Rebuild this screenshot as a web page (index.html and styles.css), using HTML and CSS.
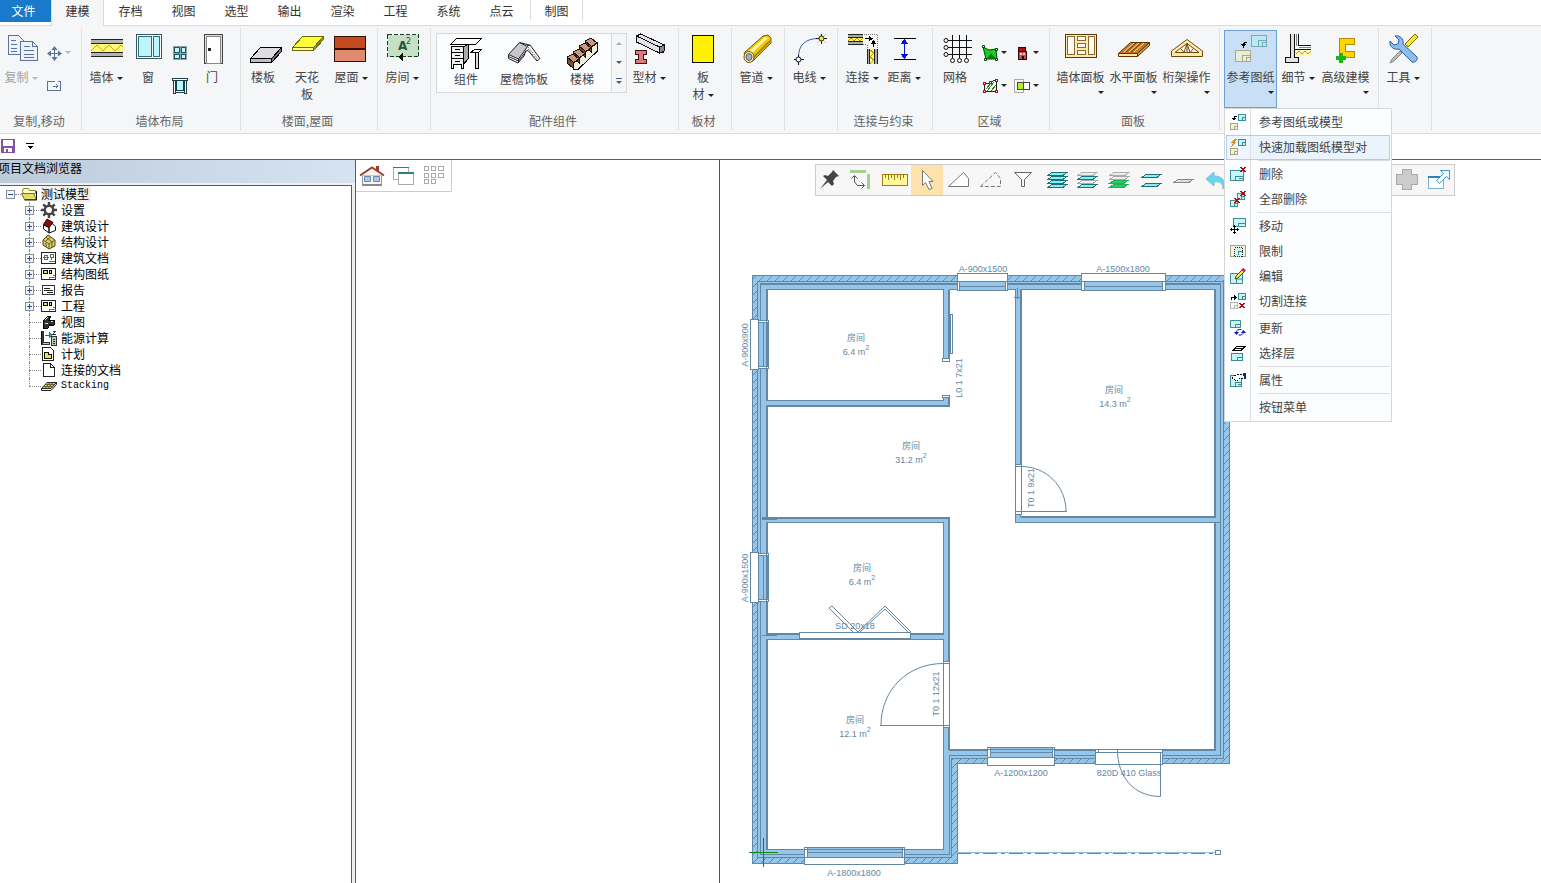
FILE: index.html
```html
<!DOCTYPE html>
<html lang="zh-CN">
<head>
<meta charset="utf-8">
<title>测试模型</title>
<link rel="stylesheet" href="styles.css">
</head>
<body>
<svg class="defs" aria-hidden="true">
  <defs>
    <symbol id="sheet" viewBox="0 0 8 7"><path d="M.5.5h7v6h-7z" fill="#c9f4f6" stroke="#3c8c94"/><path d="M4.500 6.500v-3h3" fill="none" stroke="#3c8c94"/></symbol>
    <symbol id="sheet-tan" viewBox="0 0 8 7"><path d="M.5.5h7v6h-7z" fill="#f4f2dc" stroke="#aaa37c"/><path d="M4.500 6.500v-3h3" fill="none" stroke="#aaa37c"/></symbol>
    <symbol id="sheet-gray" viewBox="0 0 8 7"><path d="M.5.5h7v6h-7z" fill="#f6f6f6" stroke="#bbb"/><path d="M4.500 6.500v-3h3" fill="none" stroke="#bbb"/></symbol>
    <symbol id="cross" viewBox="0 0 6 5"><path d="M.5 0l5 5M5.500 0l-5 5" stroke="#a80d0d" stroke-width="1.500"/></symbol>
    <g id="step"><path d="M0 0l6-3 6 5-6 4z" fill="#c79a7c" stroke="#21130c"/><path d="M0 0l6 5v6l-6-5z" fill="#795033" stroke="#21130c"/></g>
    <pattern id="hatch" width="8" height="8" patternUnits="userSpaceOnUse"><path d="M-1 9l10-10" stroke="#6488a3" stroke-width="1"/></pattern>
  </defs>
</svg>

<nav class="tabs">
  <button class="tab tab-file">文件</button>
  <button class="tab tab-active">建模</button>
  <button class="tab">存档</button>
  <button class="tab">视图</button>
  <button class="tab">选型</button>
  <button class="tab">输出</button>
  <button class="tab">渲染</button>
  <button class="tab">工程</button>
  <button class="tab">系统</button>
  <button class="tab">点云</button>
  <button class="tab tab-context">制图</button>
</nav>

<header class="ribbon">
  <section class="group g-82">
    <div class="tools">
      <button class="tool w42 disabled">
        <svg class="icon" viewBox="2 31 38 38"><g fill="#edf3fa" stroke="#5c7499"><path d="M8.500 35.500h10l5 5v14h-15z"/><path d="M11 40.500h5M11 44.500h6M11 48.500h6M11 51.500h6"/><path d="M20.500 41.500h12l5 5v14h-17z"/><path d="M32.500 41.500v5h5M24 46.500h6M24 50.500h10M24 54.500h10M24 57.500h10" fill="none"/></g></svg>
        <span class="label">复制<i class="caret"></i></span>
      </button>
      <div class="smalls start">
        <button class="small disabled" aria-label="移动"><svg class="s16 soft" viewBox="0 0 16 16"><path d="M8.500 2v12M2 8.500h12" stroke="#5c7499"/><path d="M8.500 1l3 4h-6zM8.500 16l3-4h-6zM1 8.500l4-3v6zM16 8.500l-4-3v6z" fill="#5c7499"/></svg><i class="caret"></i></button>
        <button class="small disabled" aria-label="拉伸"><svg class="s16" viewBox="0 0 16 16"><path d="M9 3.500H1.500v9H14.500V3.500H12M7 8h5M10 6l2 2-2 2" fill="none" stroke="#5c7499"/></svg></button>
      </div>
    </div>
    <h2>复制,移动</h2>
  </section>

  <section class="group g-159 pad3">
    <div class="tools">
      <button class="tool w42">
        <svg class="icon" viewBox="87 31 38 38"><path d="M91 40h32v3H91zM91 53h32v3H91z" fill="#b3b3b3"/><path d="M91 44h32v8H91z" fill="#fff77a"/><path d="M91 39.500h32M91 43.500h32M91 52.500h32M91 56.500h32" stroke="#222"/><path d="M91 51l6-6 6 6 6-6 6 6 6-6 2 2" fill="none" stroke="#c9a400"/></svg>
        <span class="label">墙体<i class="caret"></i></span>
      </button>
      <button class="tool w42">
        <svg class="icon" viewBox="129 31 38 38"><path d="M136.500 34.500h25v24h-25z" fill="#fff" stroke="#355560"/><path d="M138.500 36.500h13v20h-13zM153.500 36.500h6v20h-6z" fill="#bdf6fb" stroke="#356a78"/></svg>
        <span class="label">窗</span>
      </button>
      <div class="smalls w22">
        <button class="small" aria-label="窗型"><svg class="s16" viewBox="0 0 16 16"><path d="M1 1h14v14H1z" fill="#8aa6ac"/><path d="M2.500 2.500h5v5h-5zM9.500 2.500h4v5h-4zM2.500 9.500h5v4h-5zM9.500 9.500h4v4h-4z" fill="#bdf6fb" stroke="#245560"/></svg></button>
        <button class="small" aria-label="洞口"><svg class="s16" viewBox="0 0 16 16"><path d="M1.500 2.500h2v13h-2zM12.500 2.500h2v13h-2z" fill="#fff" stroke="#173f48"/><path d="M.5.500h15v2H.5z" fill="#fff" stroke="#173f48"/><path d="M4.500 2.500h7v10h-7z" fill="#bdf6fb" stroke="#173f48"/><path d="M4 14.500h8" stroke="#173f48"/></svg></button>
      </div>
      <button class="tool w42">
        <svg class="icon" viewBox="193 31 38 38"><path d="M204.500 34.500h18v29h-18z" fill="#ddd" stroke="#444"/><path d="M206.500 36.500h14v27h-14z" fill="#fff" stroke="#888"/><path d="M208 48h3v3h-3z" fill="#222"/></svg>
        <span class="label">门</span>
      </button>
    </div>
    <h2>墙体布局</h2>
  </section>

  <section class="group g-137">
    <div class="tools">
      <button class="tool w44">
        <svg class="icon" viewBox="244 31 38 38"><path d="M260.500 47.500h21L271.500 58.500h-21z" fill="#dcdde0" stroke="#000"/><path d="M250.500 58.500h21v4h-21z" fill="#bfbfbf" stroke="#000"/><path d="M271.500 58.500l10-11v4l-10 11z" fill="#777" stroke="#000"/></svg>
        <span class="label">楼板</span>
      </button>
      <button class="tool w44">
        <svg class="icon" viewBox="288 31 38 38"><path d="M302.500 36.500h21l-10 11h-21z" fill="#fdfd3c" stroke="#6b6a00"/><path d="M292.500 47.500h21v3h-21z" fill="#fffb9a" stroke="#6b6a00"/><path d="M313.500 47.500l10-11v3l-10 11z" fill="#a8a400" stroke="#6b6a00"/></svg>
        <span class="label">天花<br>板</span>
      </button>
      <button class="tool w44">
        <svg class="icon" viewBox="332 31 38 38"><path d="M334.500 36.500h31v12h-31z" fill="#c54a20" stroke="#330f05"/><path d="M334.500 49.500h31v12h-31z" fill="#de8c6d" stroke="#330f05"/></svg>
        <span class="label">屋面<i class="caret"></i></span>
      </button>
    </div>
    <h2>楼面,屋面</h2>
  </section>

  <section class="group g-53">
    <div class="tools">
      <button class="tool w48">
        <svg class="icon" viewBox="383 31 38 38"><path d="M387.500 34.500h31v22h-31z" fill="#c6e0c6" stroke="#123f20" stroke-dasharray="4 2"/><text x="398" y="50" class="room-a">A</text><text x="406" y="44" class="room-2">2</text><path d="M398 57l5-4v8z" fill="#111"/></svg>
        <span class="label">房间<i class="caret"></i></span>
      </button>
    </div>
  </section>

  <section class="group g-248">
    <div class="tools pad5">
      <div class="gallery">
        <button class="tool item">
          <svg class="icon" viewBox="447 34 38 36"><g stroke="#000" fill="#fff"><path d="M456.500 38.500h25l-6 6h-25z"/><path d="M451.500 46.500h12v18h-12z" fill="#eee"/><path d="M451.500 52.500h12M451.500 58.500h12M455 49.500h5M455 55.500h5M455 61.500h5" fill="none"/><path d="M463.500 46.500l5-2v14l-5 6z" fill="#aaa"/><path d="M451.500 64v4h2v-4M461.500 64v4h2v-4"/><path d="M474.500 49.500h7l-3 3h-8z"/><path d="M475.500 52.500h3v16h-3z" fill="#ddd"/></g></svg>
          <span class="label">组件</span>
        </button>
        <button class="tool item">
          <svg class="icon soft" viewBox="505 34 38 36"><path d="M508.500 54.500v4l9.500 4.500 6-7 3-9" fill="#fff" stroke="#222"/><path d="M527 46l3-1 10 13.500-3 2.500-9-10.500-3 1" fill="#fff" stroke="#222"/><path d="M519.500 42.500l8 4-9 12.500-10-4.500z" fill="#c6c8cb" stroke="#222"/><path d="M508.500 56.500l10 4.500 7-9M518.500 59v4M519.500 42.500l10 2.500" fill="none" stroke="#222"/><path d="M528 47l11 13M528 49l9 11" fill="none" stroke="#777" stroke-dasharray="2 1"/></svg>
          <span class="label">屋檐饰板</span>
        </button>
        <button class="tool item">
          <svg class="icon" viewBox="563 34 38 36"><path d="M597.500 43v8l-19 18h-5l-1-8z" fill="#efefdf" stroke="#111"/><use href="#step" x="585" y="41"/><use href="#step" x="579" y="46"/><use href="#step" x="573" y="52"/><use href="#step" x="567" y="57"/></svg>
          <span class="label">楼梯</span>
        </button>
        <div class="scroller"><button aria-label="上"><i class="caret up"></i></button><button aria-label="下"><i class="caret blue"></i></button><button aria-label="更多"><i class="caret blue more"></i></button></div>
      </div>
      <button class="tool w44">
        <svg class="icon" viewBox="631 31 38 38"><path d="M637.500 36l4-2 24 11-1 7-4 1-23-11z" fill="#e4e4e6" stroke="#111"/><path d="M637.500 36l23 11v6" fill="none" stroke="#111"/><path d="M660.500 47l4.500-2v6l-4.500 2z" fill="#888" stroke="#111"/><path d="M636.500 50.500h11v4h-3v5h3v4h-11v-4h3v-5h-3z" fill="#df7a7a" stroke="#451212"/></svg>
        <span class="label">型材<i class="caret"></i></span>
      </button>
    </div>
    <h2>配件组件</h2>
  </section>

  <section class="group g-53">
    <div class="tools">
      <button class="tool w48">
        <svg class="icon" viewBox="684 31 38 38"><path d="M692.500 35.500h21v27h-21z" fill="#fff200" stroke="#111"/></svg>
        <span class="label">板<br>材<i class="caret"></i></span>
      </button>
    </div>
    <h2>板材</h2>
  </section>

  <section class="group g-53">
    <div class="tools">
      <button class="tool w48">
        <svg class="icon soft" viewBox="737 31 38 38"><path d="M744 53l19-17 5-1 3 3v5l-18 18-6 1z" fill="#f0c808" stroke="#6e5a00"/><path d="M747 53l18-16 3 1-18 17z" fill="#fff6a0"/><path d="M753 58l17-17" stroke="#a88a00" stroke-width="2"/><ellipse cx="749" cy="57" rx="5" ry="5.500" fill="#f7f3d0" stroke="#6e5a00"/><ellipse cx="749" cy="57" rx="3" ry="3.500" fill="#a9adb8" stroke="#5b5e70"/></svg>
        <span class="label">管道<i class="caret"></i></span>
      </button>
    </div>
  </section>

  <section class="group g-53">
    <div class="tools">
      <button class="tool w48">
        <svg class="icon soft" viewBox="790 31 38 38"><path d="M798.500 57c0-12 7-18.500 20-18.500" fill="none" stroke="#3c62b5"/><path d="M817 34l9 9M826 34l-9 9" stroke="#e6d800"/><path d="M821.500 34v10M816 38.500h11M798.500 55v10M794 59.500h10" stroke="#111"/><circle cx="821.500" cy="38.500" r="2.500" fill="#ffef00" stroke="#222"/><circle cx="798.500" cy="59.500" r="2.500" fill="#fff" stroke="#111"/></svg>
        <span class="label">电线<i class="caret"></i></span>
      </button>
    </div>
  </section>

  <section class="group g-95 pad3">
    <div class="tools">
      <button class="tool w42">
        <svg class="icon" viewBox="843 31 38 38"><path d="M848 34h15v3h-15zM848 42h15v3h-15zM867 49h3v15h-3zM875 49h3v15h-3z" fill="#aaa"/><path d="M848 37h15v5h-15zM870 49h5v15h-5z" fill="#fff77a"/><path d="M848 34.500h15M848 37.500h15M848 41.500h15M848 44.500h15M867.500 49v15M869.500 49v15M874.500 49v15M877.500 49v15" stroke="#222"/><path d="M848 41l3-3 3 3 3-3 3 3 3-3M870 50l4 3-4 4 4 3-4 4" stroke="#bb9b00" fill="none"/><path d="M864 34.500h13.500v14M863 44.500h4v4" fill="none" stroke="#777" stroke-dasharray="1 1"/><path d="M865 38.500h5M873.500 47v-5" stroke="#000"/><path d="M869 36l4 2.500-4 3zM870.500 44l3-4 3 4z"/></svg>
        <span class="label">连接<i class="caret"></i></span>
      </button>
      <button class="tool w42">
        <svg class="icon" viewBox="885 31 38 38"><path d="M894 38.500h22M894 59.500h22" stroke="#000"/><path d="M904.500 41v16" stroke="#0712d8"/><path d="M904.500 39l4 5h-8zM904.500 59l4-5h-8z" fill="#0712d8"/></svg>
        <span class="label">距离<i class="caret"></i></span>
      </button>
    </div>
    <h2>连接与约束</h2>
  </section>

  <section class="group g-117 pad1">
    <div class="tools">
      <button class="tool w42">
        <svg class="icon" viewBox="936 31 38 38"><g fill="none" stroke="#111"><path d="M948 40.500h24M948 47.500h24M948 54.500h24M952.500 35v23M959.500 35v23M966.500 35v23"/><g class="soft"><circle cx="946" cy="40.500" r="2"/><circle cx="946" cy="47.500" r="2"/><circle cx="946" cy="54.500" r="2"/><circle cx="952.500" cy="60.500" r="2"/><circle cx="959.500" cy="60.500" r="2"/><circle cx="966.500" cy="60.500" r="2"/></g></g></svg>
        <span class="label">网格</span>
      </button>
      <div class="smalls pairs">
        <button class="small" aria-label="区域"><svg class="s16 soft" viewBox="0 0 16 16"><path d="M1 2l6 3 7-1 1 10H4z" fill="#18d018" stroke="#064306"/><path d="M5 14l4-6 5 6z" fill="#0a6e12"/><path d="M.5.500h2v2h-2zM13.500 3.500h2v2h-2zM2.500 13.500h2v2h-2zM13.500 13.500h2v2h-2z" fill="#fff" stroke="#064306"/></svg><i class="caret"></i></button>
        <button class="small" aria-label="建筑"><svg class="s16" viewBox="0 0 16 16"><path d="M4.500 2.500h7v4h-7z" fill="#a90f14" stroke="#350406"/><path d="M4.500 6.500h8v8h-8z" fill="#bb5148" stroke="#350406"/><path d="M6 8h2v2H6zM9 8h2v2H9z" fill="#ffd3c8"/><path d="M8 11h2v3H8z" fill="#350406"/></svg><i class="caret"></i></button>
        <button class="small" aria-label="填充"><svg class="s16" viewBox="0 0 16 16"><path d="M2.500 5.500h5l4-3h3v11h-12z" fill="#eefae8" stroke="#222"/><path d="M4 11l5-6M5 13l7-9M9 13l5-6" stroke="#2f7d2f"/><path d="M1.500 4.500h2v2h-2zM1.500 12.500h2v2h-2zM13.500 1.500h2v2h-2zM13.500 12.500h2v2h-2zM7.500 3.500h2v2h-2z" fill="#fff" stroke="#b01010"/></svg><i class="caret"></i></button>
        <button class="small" aria-label="重叠"><svg class="s16" viewBox="0 0 16 16"><path d="M.5 1.500h9v13h-9z" fill="#f8f8f8" stroke="#aaa"/><path d="M3.500 4.500h12v7h-12z" fill="#fff" stroke="#444"/><path d="M4 5h5v6H4z" fill="#b8f01c"/><path d="M9.500 4v8" stroke="#444"/></svg><i class="caret"></i></button>
      </div>
    </div>
    <h2>区域</h2>
  </section>

  <section class="group g-170 pad4">
    <div class="tools">
      <button class="tool w53">
        <svg class="icon" viewBox="1061 31 38 38"><path d="M1064.500 34.500h31v23h-31z" fill="#ffe9ae" stroke="#5b3c06"/><path d="M1066.500 36.500h7v18h-7zM1076.500 36.500h8v4h-8zM1076.500 43.500h8v4h-8zM1076.500 50.500h8v4h-8zM1087.500 36.500h6v18h-6z" fill="#fffdf6" stroke="#8a672a"/></svg>
        <span class="label">墙体面板<i class="caret below"></i></span>
      </button>
      <button class="tool w53">
        <svg class="icon soft" viewBox="1114 31 38 38"><path d="M1129.500 42.500h19l-12 11h-19z" fill="#c27a28" stroke="#5b3206"/><path d="M1117.500 53.500h19v3h-19z" fill="#ffe3a0" stroke="#5b3206"/><path d="M1136.500 53.500l12-11v3l-12 11z" fill="#d79a48" stroke="#5b3206"/><path d="M1123 52l10-9M1128 52l10-9M1133 52l10-9" stroke="#ffdc98"/><path d="M1125 52l10-9M1130 52l10-9" stroke="#6b3b08"/></svg>
        <span class="label">水平面板<i class="caret below"></i></span>
      </button>
      <button class="tool w53">
        <svg class="icon soft" viewBox="1167 31 38 38"><path d="M1170.500 51l15.500-11.500 15.500 11.500v5.500h-31z" fill="#ffe9ae" stroke="#6b480a"/><path d="M1174 52.500l12-9 12 9z" fill="#fffaf0" stroke="#6b480a"/><path d="M1186 43v9M1180 49l3 3.500 3-9 3 9 3-3.500" fill="none" stroke="#6b480a"/></svg>
        <span class="label">桁架操作<i class="caret below"></i></span>
      </button>
    </div>
    <h2>面板</h2>
  </section>

  <section class="group g-159 pad4">
    <div class="tools">
      <div class="menu-anchor">
        <button class="tool w53 pressed" aria-expanded="true">
          <svg class="icon" viewBox="1231 31 38 38"><path d="M1250.500 35.500h15v11h-15z" fill="#bce9ef" stroke="#7aa9ba"/><path d="M1257.500 46v-6h8M1261 46v-4h4M1261 42.500h4" fill="none" stroke="#7aa9ba"/><path d="M1234.500 50.500h15v11h-15z" fill="#e9eedb" stroke="#aaa98c"/><path d="M1241.500 61v-6h8M1245 61v-3.500h4" fill="none" stroke="#aaa98c"/><path d="M1246 42.500h-2.500l-1 2" fill="none" stroke="#000"/><path d="M1240 44h5l-2.500 4z"/></svg>
          <span class="label">参考图纸<i class="caret below"></i></span>
        </button>
        <ul class="menu">
          <li><button><svg class="s16" viewBox="0 0 16 16"><use href="#sheet" x="8" y="0" width="8" height="7"/><use href="#sheet-tan" x="0" y="9" width="8" height="7"/><path d="M7 2.500H4.500V5" fill="none" stroke="#000"/><path d="M1.500 4h5L4 7z"/></svg>参考图纸或模型</button></li>
          <li><button class="hot"><svg class="s16" viewBox="0 0 16 16"><use href="#sheet" x="8" y="0" width="8" height="7"/><use href="#sheet-tan" x="0" y="9" width="8" height="7"/><path d="M4 0L0 4h3L1 8l6-5H4l3-3z" fill="#f08c10"/></svg>快速加载图纸模型对</button></li>
          <li class="gap"></li>
          <li><button><svg class="s16" viewBox="0 0 16 16"><path d="M.5 4.500h13v10H.5z" fill="#c9f4f6" stroke="#3c8c94"/><path d="M5.500 14v-4h8M9 12.500h4" fill="none" stroke="#3c8c94"/><use href="#cross" x="10" y="1" width="6" height="5"/></svg>删除</button></li>
          <li><button><svg class="s16" viewBox="0 0 16 16"><use href="#sheet" x="7" y="2" width="8" height="7"/><use href="#sheet" x="0" y="9" width="8" height="7"/><use href="#cross" x="10" y="0" width="6" height="5"/><use href="#cross" x="4" y="7" width="6" height="5"/></svg>全部删除</button></li>
          <li class="gap"></li>
          <li><button><svg class="s16" viewBox="0 0 16 16"><path d="M3.500.500h12v8h-12z" fill="#c9f4f6" stroke="#3c8c94"/><path d="M8.500 8V5.500h7" fill="none" stroke="#3c8c94"/><path d="M4.500 8v8M0 11.500h9" stroke="#000"/><path d="M4.500 7l2 2h-4zM4.500 16l2-2h-4zM0 11.500l2-2v4zM9 11.500l-2-2v4z"/></svg>移动</button></li>
          <li><button><svg class="s16" viewBox="0 0 16 16"><path d="M.5 2.500h15v11H.5z" fill="#f4f2dc" stroke="#aaa37c"/><path d="M4.500 4.500h8v9h-8z" fill="#c9f4f6" stroke="#222" stroke-dasharray="1 1"/><path d="M8.500 12V8.500h4" fill="none" stroke="#3c8c94"/></svg>限制</button></li>
          <li><button><svg class="s16 soft" viewBox="0 0 16 16"><path d="M.5 5.500h12v10H.5z" fill="#c9f4f6" stroke="#3c8c94"/><path d="M6.500 15v-4h6" fill="none" stroke="#3c8c94"/><path d="M5 11l1-3 7-7 2 2-7 7z" fill="#f5e04a" stroke="#574a10"/><path d="M13 0l3 2-2 2-3-2z" fill="#d02030"/></svg>编辑</button></li>
          <li><button><svg class="s16" viewBox="0 0 16 16"><use href="#sheet" x="8" y="0" width="8" height="7"/><use href="#sheet-gray" x="0" y="9" width="8" height="7"/><use href="#cross" x="9" y="10" width="6" height="5"/><path d="M1.500 7V4.500H5" fill="none" stroke="#000"/><path d="M4 2l3 2.500L4 7z"/></svg>切割连接</button></li>
          <li class="gap"></li>
          <li><button><svg class="s16 soft" viewBox="0 0 16 16"><path d="M.5.500h10v7H.5z" fill="#c9f4f6" stroke="#3c8c94"/><path d="M5.500 7V4.500h5" fill="none" stroke="#3c8c94"/><path d="M6.500 12c0-2 2-3 5-2.500M13.500 12c0 2-2 3.500-5 3" fill="none" stroke="#1014b5"/><path d="M4 12h5l-2.500 3zM11 13h5l-2.500-3z" fill="#1014b5"/></svg>更新</button></li>
          <li><button><svg class="s16" viewBox="0 0 16 16"><path d="M1.500 8.500h11v7h-11z" fill="#c9f4f6" stroke="#3c8c94"/><path d="M7.500 15v-3h5" fill="none" stroke="#3c8c94"/><path d="M6 1h10l-4 5H2z"/><path d="M6 2.500h7M5 4.500h6" stroke="#fff"/></svg>选择层</button></li>
          <li class="gap"></li>
          <li><button><svg class="s16" viewBox="0 0 16 16"><path d="M.5 3.500h11v11H.5z" fill="#c9f4f6" stroke="#3c8c94"/><path d="M5.500 14v-4h6M8 12.500h3" fill="none" stroke="#3c8c94"/><path d="M2 6l5-4h7v4h-4L7 9z" fill="#fff" stroke="#000" stroke-dasharray="2 1"/><path d="M13 1h3v6h-2z" fill="#1a1e7c"/></svg>属性</button></li>
          <li class="gap"></li>
          <li><button><span class="s16"></span>按钮菜单</button></li>
        </ul>
      </div>
      <button class="tool w42">
        <svg class="icon" viewBox="1279 31 38 38"><path d="M1290 34h4v24h5v4h-14v-4h5z" fill="#e2e2e2"/><path d="M1290.500 34v23.500h-5v5h13v-5h-4V34M1298.500 34v11.500h12M1294 49.500h17" fill="none" stroke="#111"/><path d="M1296.500 34v12M1299 47.500h12" stroke="#888"/><path d="M1295 50h16v5h-16z" fill="#fff9b4"/><path d="M1296 54l3-3 3 3 3-3 3 3 3-3" fill="none" stroke="#999a60"/></svg>
        <span class="label">细节<i class="caret"></i></span>
      </button>
      <button class="tool w53">
        <svg class="icon" viewBox="1326 31 38 38"><path d="M1338.500 38.500h15v6h-9v7h9v6h-15z" fill="#ffd400" stroke="#b58e00"/><path d="M1338 53h3v3h3v3h-3v3h-3v-3h-3v-3h3z" fill="#16b916" stroke="#16b916"/></svg>
        <span class="label">高级建模<i class="caret below"></i></span>
      </button>
    </div>
  </section>

  <section class="group g-53">
    <div class="tools">
      <button class="tool w48">
        <svg class="icon soft" viewBox="1384 31 38 38"><path d="M1415 34l3 3-10 10-3-3z" fill="#f8e524" stroke="#7c6d00"/><path d="M1400 51l-8 8-2 4 4-2 8-8z" fill="#bbb" stroke="#888"/><path d="M1390 41l4 4 4-1 1-4-4-4c5-1 9 3 8 8l14 13c1 3-2 6-5 5l-13-13c-5 1-10-2-9-8z" fill="#8fbdf0" stroke="#2c5f9e"/></svg>
        <span class="label">工具<i class="caret"></i></span>
      </button>
    </div>
  </section>
</header>

<div class="quick">
  <button aria-label="保存"><svg width="14" height="14" viewBox="0 0 14 14"><path d="M0 0h14v14H0z" fill="#8254a2"/><path d="M2 1h10v6H2zM3 9h8v4H3z" fill="#fff"/><path d="M5 10h2v3H5z" fill="#8254a2"/></svg></button>
  <button aria-label="自定义"><svg width="8" height="6" viewBox="0 0 8 6"><path d="M0 0h8v1H0zM1 3h6L4 6z"/></svg></button>
</div>

<main class="work">
  <aside class="browser">
    <h1>项目文档浏览器</h1>
    <div class="tree">
      <div class="node root"><button class="exp" aria-label="折叠"><svg width="9" height="9" viewBox="0 0 9 9"><path d="M.5.500h8v8h-8z" fill="#f2f4f8" stroke="#8a8f98"/><path d="M2 4.500h5" stroke="#2f4d96"/></svg></button><i class="dots"></i><svg class="s16 soft" viewBox="0 0 16 16"><path d="M1.500 5.500l1-3h5l1 2h6v3h-12z" fill="#fffbd0" stroke="#8a8427"/><path d="M.5 7.500h12l3 6h-12z" fill="#e8df62" stroke="#77711d"/><path d="M15.500 5v9h-12" fill="none" stroke="#111"/></svg><span class="name selected">测试模型</span></div>
      <ul>
        <li class="node"><button class="exp" aria-label="展开"><svg width="9" height="9" viewBox="0 0 9 9"><path d="M.5.500h8v8h-8z" fill="#f2f4f8" stroke="#8a8f98"/><path d="M2 4.500h5M4.500 2v5" stroke="#2f4d96"/></svg></button><i class="dots"></i><svg class="s16 soft" viewBox="0 0 16 16"><path d="M8 0v16M0 8h16M2.300 2.300l11.400 11.400M13.700 2.300L2.300 13.700" stroke="#444" stroke-width="2.500"/><circle cx="8" cy="8" r="4.200" fill="#fff" stroke="#444" stroke-width="2.500"/></svg><span class="name">设置</span></li>
        <li class="node"><button class="exp" aria-label="展开"><svg width="9" height="9" viewBox="0 0 9 9"><path d="M.5.500h8v8h-8z" fill="#f2f4f8" stroke="#8a8f98"/><path d="M2 4.500h5M4.500 2v5" stroke="#2f4d96"/></svg></button><i class="dots"></i><svg class="s16 soft" viewBox="0 0 16 16"><path d="M2.500 7l5.500 2.500v5.500l-5.500-4zM8 9.500l3-4 3.500 3v4L8 15z" fill="#fff" stroke="#111"/><path d="M6 1l6 3.500-4 5-5.500-3z" fill="#8c0b0b" stroke="#300"/></svg><span class="name">建筑设计</span></li>
        <li class="node"><button class="exp" aria-label="展开"><svg width="9" height="9" viewBox="0 0 9 9"><path d="M.5.500h8v8h-8z" fill="#f2f4f8" stroke="#8a8f98"/><path d="M2 4.500h5M4.500 2v5" stroke="#2f4d96"/></svg></button><i class="dots"></i><svg class="s16 soft" viewBox="0 0 16 16"><path d="M7 1l7 5v6l-6 3-6-4V6z" fill="#d4cb6a" stroke="#4b4510"/><path d="M2 6l6 4 6-4M8 10v5M5 3l6 5M9 3L4 8M5 9v4M11 8v5" fill="none" stroke="#6b6420"/></svg><span class="name">结构设计</span></li>
        <li class="node"><button class="exp" aria-label="展开"><svg width="9" height="9" viewBox="0 0 9 9"><path d="M.5.500h8v8h-8z" fill="#f2f4f8" stroke="#8a8f98"/><path d="M2 4.500h5M4.500 2v5" stroke="#2f4d96"/></svg></button><i class="dots"></i><svg class="s16" viewBox="0 0 16 16"><path d="M.5 2.500h14v11H.5z" fill="#fff" stroke="#222"/><path d="M2 7.500h6M3.500 5.500h3v4h-3zM9.500 4.500h3v3h-3zM10.500 8v2M8 11.500h6" fill="none" stroke="#666"/></svg><span class="name">建筑文档</span></li>
        <li class="node"><button class="exp" aria-label="展开"><svg width="9" height="9" viewBox="0 0 9 9"><path d="M.5.500h8v8h-8z" fill="#f2f4f8" stroke="#8a8f98"/><path d="M2 4.500h5M4.500 2v5" stroke="#2f4d96"/></svg></button><i class="dots"></i><svg class="s16" viewBox="0 0 16 16"><path d="M.5 2.500h14v11H.5z" fill="#fff" stroke="#222"/><path d="M2.500 4.500h4v3h-4zM8.500 4.500h2v3h-2z" fill="#e7dd65" stroke="#000"/><path d="M8.500 13v-2h6M12 9.500h2" fill="none" stroke="#777"/></svg><span class="name">结构图纸</span></li>
        <li class="node"><button class="exp" aria-label="展开"><svg width="9" height="9" viewBox="0 0 9 9"><path d="M.5.500h8v8h-8z" fill="#f2f4f8" stroke="#8a8f98"/><path d="M2 4.500h5M4.500 2v5" stroke="#2f4d96"/></svg></button><i class="dots"></i><svg class="s16" viewBox="0 0 16 16"><path d="M1.500 3.500h12v9h-12z" fill="#fff" stroke="#333"/><path d="M3 6.500h6M3 8.500h9M6 10.500h6" stroke="#222"/></svg><span class="name">报告</span></li>
        <li class="node"><button class="exp" aria-label="展开"><svg width="9" height="9" viewBox="0 0 9 9"><path d="M.5.500h8v8h-8z" fill="#f2f4f8" stroke="#8a8f98"/><path d="M2 4.500h5M4.500 2v5" stroke="#2f4d96"/></svg></button><i class="dots"></i><svg class="s16" viewBox="0 0 16 16"><path d="M.5 2.500h14v11H.5z" fill="#fff" stroke="#222"/><path d="M2.500 4.500h4v3h-4zM8.500 4.500h2v3h-2z" fill="#e7dd65" stroke="#000"/><path d="M8.500 13v-2h6M12 9.500h2" fill="none" stroke="#777"/></svg><span class="name">工程</span></li>
        <li class="node leaf"><i class="dots"></i><svg class="s16" viewBox="0 0 16 16"><path d="M2 7l5-5h3l-2 4h5v5l-3 1-1-2-2 4H2z" fill="#333" stroke="#000"/><path d="M4 6l3-3M4 9h3M10 7h2" stroke="#ddd"/></svg><span class="name">视图</span></li>
        <li class="node leaf"><i class="dots"></i><svg class="s16" viewBox="0 0 16 16"><path d="M.5 1v14M2.500 1v10" stroke="#111"/><path d="M1 1h1v11h6v2H1z" fill="#e6d900" stroke="#333"/><path d="M4 5h4M8 2l3 3-3 3z" stroke="#137a85" fill="#1fb9c4"/><path d="M10.500 6.500h5v9h-5z" fill="#b9c9b0" stroke="#333"/><path d="M12 9h2M12 11h2M12 13h2M12 1h3l-3 3h3" fill="none" stroke="#333"/></svg><span class="name">能源计算</span></li>
        <li class="node leaf"><i class="dots"></i><svg class="s16" viewBox="0 0 16 16"><path d="M1.500 1.500h8l3 3v10h-11z" fill="#fff" stroke="#222"/><path d="M3.500 6.500h4v2h3v4h-7z" fill="#efe23a" stroke="#111"/></svg><span class="name">计划</span></li>
        <li class="node leaf"><i class="dots"></i><svg class="s16" viewBox="0 0 16 16"><path d="M2.500 1.500h7l4 4v9h-11z" fill="#fff" stroke="#222"/><path d="M9.500 1.500v4h4" fill="none" stroke="#222"/></svg><span class="name">连接的文档</span></li>
        <li class="node leaf"><i class="dots"></i><svg class="s16 soft" viewBox="0 0 16 16"><path d="M6 4.500h9.500l-5.500 6H.5z" fill="#d2c86a" stroke="#222"/><path d="M.5 10.500v2h9.500l5.500-6v-2" fill="none" stroke="#222"/><path d="M4 6.500h9M2 8.500h9M9 4.500l-5 6M12 4.500l-5 6" stroke="#665f20"/></svg><span class="name mono">Stacking</span></li>
      </ul>
    </div>
  </aside>

  <section class="canvas">
    <svg class="plan" role="img" aria-label="平面图">
      <g transform="translate(-356 -160)">
        <path d="M719 160h1v2000h-1z" fill="#148014"/>
        <g class="crisp">
          <path d="M752.500 275.500h477v488h-272v100h-205z" class="wall"/>
          <path d="M752.500 275.500h477v488h-272v100h-205z" fill="url(#hatch)"/>
          <path d="M757.500 281.500h466v477h-272v99h-194z" class="wall"/>
          <path d="M760.500 284.500h460v471h-271v99h-189z" class="wall"/>
          <path d="M760 284h461" class="thick"/>
          <path d="M766.500 289.500h177v111h-177zM1020.500 289.500h195v227h-195zM766.500 522.500h177v111h-177zM766.500 639.500h177v210h-177z" class="room"/>
          <path d="M949.500 289.500h66v233h200v227h-266V517.500H766.500V406.500h183z" class="room"/>
          <path d="M767 290v111M767 406v111M767 522v111M767 639v211M949 290v68M949 397v10M949 517v144M949 727v23M1021 290v175M1215 290v227M1215 522v228M766 406h184M762 518h188M1021 517h195M766 634h178M949 750h267" class="thick"/>
          <path d="M762 519.500h15M762 635.500h15M1207 522.500h14M1017 288v11M1014 297.500h7" class="line"/>
          <g class="open">
            <path d="M957.500 273.500h50v8h-50zM1081.500 273.500h84v8h-84zM750.500 319.500h8v50h-8zM750.500 552.500h8v50h-8zM804.500 857.500h100v7h-100zM987.500 757.500h67v8h-67z"/>
            <path d="M957.500 281.500h50v9h-50zM1081.500 281.500h84v9h-84zM758.500 320.500h10v48h-10zM758.500 553.500h10v48h-10zM804.500 847.500h100v10h-100zM987.500 747.500h67v10h-67z"/>
            <path d="M1095.500 749.500h67v15h-67zM799.500 632.500h111v6h-111zM943.500 661.500h6v66h-6zM1015.500 464.500h6v50h-6z"/>
          </g>
          <path d="M942 361h9v34h-9z" fill="#fff"/>
          <path d="M942.500 358.500h7v3h-7zM942.500 395.500h7v2h-7zM950.500 314.500h2v39h-2z" class="open"/>
          <path d="M959.500 281.500h46v9h-46zM1084.500 281.500h78v9h-78zM758.500 322.500h9v44h-9zM758.500 555.500h9v44h-9zM807.500 847.500h95v10h-95zM990.500 747.500h62v10h-62z" class="wall"/>
          <path d="M959 286.500h47M1084 286.500h79M763.500 322v45M763.500 555v45M807 852.500h96M990 752.500h63M766.500 320v49M766.500 553v49M804 849.500h100M987 749.500h67M1095 752.500h67M1098.500 749v4" class="line"/>
        </g>
        <g class="line">
          <path d="M1160.500 752v44.500c-26 0-43-19-43-46.500"/>
          <path d="M943 663.500h7M943 663.500c-35 0-62 26-62 62M880 725.500h70"/>
          <path d="M1015 466.500h6c25 0 45 19 45 45M1015 511.500h52"/>
          <path d="M829 608l24 24M832 606l26 26M858 632l27-26 26 26M860 632l25-23 23 23M829 608l3-2"/>
        </g>
        <g class="crisp">
          <path d="M957 852.500h258" stroke="#8fc0e4"/>
          <path d="M957 853.500h258" class="line" stroke-dasharray="14 4 4 4"/>
          <path d="M1215.500 850.500h5v4h-5z" class="open"/>
          <path d="M749 852h29v1h-29zM763 838h1v29h-1z" fill="#0b8a1b"/>
        </g>
        <g class="note">
          <text x="983" y="272">A-900x1500</text><text x="1123" y="272">A-1500x1800</text>
          <text x="854" y="876">A-1800x1800</text><text x="1021" y="776">A-1200x1200</text>
          <text x="1129" y="776">820D 410 Glass</text><text x="855" y="629">SD 20x18</text>
          <text transform="translate(748 345) rotate(-90)">A-900x900</text>
          <text transform="translate(748 578) rotate(-90)">A-900x1500</text>
          <text transform="translate(962 378) rotate(-90)">L0 1 7x21</text>
          <text transform="translate(1034 488) rotate(-90)">T0 1 9x21</text>
          <text transform="translate(939 694) rotate(-90)">T0 1 12x21</text>
          <text x="856" y="341">房间</text><text x="856" y="355">6.4 m<tspan class="sup" dy="-5">2</tspan></text>
          <text x="911" y="449">房间</text><text x="911" y="463">31.2 m<tspan class="sup" dy="-5">2</tspan></text>
          <text x="1114" y="393">房间</text><text x="1115" y="407">14.3 m<tspan class="sup" dy="-5">2</tspan></text>
          <text x="862" y="571">房间</text><text x="862" y="585">6.4 m<tspan class="sup" dy="-5">2</tspan></text>
          <text x="855" y="723">房间</text><text x="855" y="737">12.1 m<tspan class="sup" dy="-5">2</tspan></text>
        </g>
      </g>
    </svg>

    <div class="bar views">
      <button aria-label="主页"><svg class="soft" viewBox="356 160 32 30"><path d="M362.500 175.500h19v9h-19z" fill="#fbf6ee" stroke="#999"/><path d="M362 184h20v2h-20z" fill="#888"/><path d="M360 175.500l12-8 12 8" fill="#fbf6ee" stroke="#a03c30" stroke-width="2"/><path d="M376 166h3v5h-3z" fill="#a03c30"/><path d="M364.500 176.500h6v5h-6zM373.500 176.500h6v5h-6z" fill="#abc9e8" stroke="#6889ad"/></svg></button>
      <button aria-label="窗口"><svg viewBox="388 160 32 30"><path d="M393.500 168v11h15v-12" fill="#fff" stroke="#aaa"/><path d="M393 167.500h16" stroke="#2f8079"/><path d="M398.500 172v12.500h15V172" fill="#fff" stroke="#aaa"/><path d="M398 172.500h16" stroke="#2f8079" stroke-width="2"/></svg></button>
      <button aria-label="平铺"><svg viewBox="420 160 32 30"><path d="M424.500 166.500h4v4h-4zM431.500 166.500h4v4h-4zM438.500 166.500h5v4h-5zM424.500 173.500h4v4h-4zM431.500 173.500h4v4h-4zM438.500 173.500h5v4h-5zM424.500 179.500h4v4h-4zM431.500 179.500h4v4h-4z" fill="#fff" stroke="#aaa"/></svg></button>
    </div>

    <div class="bar draw">
      <button aria-label="固定"><svg class="soft" viewBox="815 165 32 30"><path d="M833 170l6 6-3 1-3 4 1 3-2 2-4-4-8 7 7-9-4-4 2-1 3 1 4-4z" fill="#444"/></svg></button>
      <button aria-label="坐标"><svg class="soft" viewBox="847 165 32 30"><path d="M850 170h16v3h-16zM867 174h3v15h-3z" fill="#a3d08e"/><path d="M854.500 176v6l3 3.500h7" fill="none" stroke="#555"/><path d="M851.500 178.500l3-3 3 3M861.500 182.500l3 3-3 3" fill="none" stroke="#555"/></svg></button>
      <button aria-label="标尺"><svg viewBox="879 165 32 30"><path d="M882.500 174.500h25v11h-25z" fill="#fff797" stroke="#9c7c18"/><path d="M885.500 175v3M888.500 175v5M891.500 175v3M894.500 175v5M897.500 175v3M900.500 175v5M903.500 175v3" stroke="#9c7c18"/></svg></button>
      <button class="on" aria-label="选择"><svg class="soft" viewBox="911 165 32 30"><path d="M922.500 170.500v15l3-3 3.500 7 3-1-3-7h4z" fill="#fff" stroke="#777"/></svg></button>
      <button aria-label="多边形"><svg class="soft" viewBox="943 165 32 30"><path d="M948.500 186.500l15-14 5 6v8z" fill="#fff" stroke="#777"/></svg></button>
      <button aria-label="虚线"><svg class="soft" viewBox="975 165 32 30"><path d="M980.500 186.500l15-14 5 6v8z" fill="none" stroke="#777" stroke-dasharray="4 2"/></svg></button>
      <button aria-label="筛选"><svg class="soft" viewBox="1007 165 32 30"><path d="M1014.500 172.500h17l-7 7v7h-3v-7z" fill="#fff" stroke="#666"/></svg></button>
      <button aria-label="全部层"><svg viewBox="1039 165 32 30"><g fill="#83f0f4" stroke="#236f78"><path d="M1052 172.500h15l-4 3h-15zM1052 176.500h15l-4 3h-15zM1052 180.500h15l-4 3h-15zM1052 184.500h15l-4 3h-15z"/></g></svg></button>
      <button aria-label="层"><svg viewBox="1071 165 32 30"><path d="M1082 172.500h15l-4 3h-15zM1082 180.500h15l-4 3h-15z" fill="#eee" stroke="#aaa"/><path d="M1082 176.500h15l-4 3h-15zM1082 184.500h15l-4 3h-15z" fill="#83f0f4" stroke="#236f78"/></svg></button>
      <button aria-label="当前层"><svg viewBox="1103 165 32 30"><path d="M1114 172.500h15l-4 3h-15zM1114 176.500h15l-4 3h-15z" fill="#eee" stroke="#aaa"/><path d="M1114 180.500h14l-4 3h-15zM1114 184.500h14l-4 3h-15z" fill="#26cf66" stroke="#27ad5b"/></svg></button>
      <button aria-label="两层"><svg viewBox="1135 165 32 30"><path d="M1146 174.500h15l-4 3h-15zM1146 183.500h15l-4 3h-15z" fill="#83f0f4" stroke="#236f78"/></svg></button>
      <button aria-label="单层"><svg viewBox="1167 165 32 30"><path d="M1178 179.500h15l-4 3h-15z" fill="#ddd" stroke="#888"/></svg></button>
      <button aria-label="撤消"><svg class="soft" viewBox="1199 165 32 30"><path d="M1206 179l8-7v4c8 0 13 5 9 13 0-6-3-8-9-7v4z" fill="#62d8ee" stroke="#8db9cf"/></svg></button>
      <span class="covered"></span>
      <button aria-label="添加"><svg viewBox="1391 165 32 30"><path d="M1402.500 169.500h9v5h6v10h-6v5h-9v-5h-6v-10h6z" fill="#ccc" stroke="#aaa"/></svg></button>
      <button aria-label="导出"><svg class="soft" viewBox="1423 165 32 30"><path d="M1428.500 176.500h15v12h-15z" fill="#fff" stroke="#79afd0"/><path d="M1428 177h16" stroke="#2f83b5" stroke-width="2"/><path d="M1440.500 170.500h9v9l-3-3-7 7-3-3 7-7z" fill="#f4faff" stroke="#4a94c0"/></svg></button>
    </div>
  </section>
</main>
</body>
</html>
```
FILE: styles.css
```css
* { box-sizing: border-box; }
body {
  margin: 0;
  min-height: 100vh;
  display: flex;
  flex-direction: column;
  background: #fff;
  color: #444;
  font: 12px/16px "Noto Sans CJK SC", sans-serif;
}
button {
  margin: 0;
  padding: 0;
  border: 0;
  background: none;
  color: inherit;
  font: inherit;
}
h1, h2 { margin: 0; font: inherit; }
ul { margin: 0; padding: 0; list-style: none; }
svg { display: block; flex: none; shape-rendering: crispEdges; }
.soft { shape-rendering: auto; }
.defs { position: absolute; width: 0; height: 0; }

.tabs { display: flex; height: 26px; border-bottom: 1px solid #dadbdc; }
.tab { width: 53px; padding-bottom: 3px; color: #333; }
.tab-file { width: 51px; height: 22px; padding: 0 4px 1px 0; background: #1979ca; color: #fff; }
.tab-active {
  height: 26px;
  padding-bottom: 4px;
  border: 1px solid #dadbdc;
  border-width: 0 1px;
  background: #f5f6f7;
}
.tab-context { height: 20px; margin-left: 2px; padding: 2px 0 0; border: 1px solid #ddd; border-width: 0 1px; }

.ribbon {
  display: flex;
  height: 108px;
  background: #f5f6f7;
  border-bottom: 1px solid #dadbdc;
}
.group {
  display: flex;
  flex-direction: column;
  flex: none;
  margin: 2px 0 3px;
  padding-top: 2px;
  border-right: 1px solid #e0e1e3;
}
.g-53 { width: 53px; }
.g-82 { width: 82px; }
.g-95 { width: 95px; }
.g-117 { width: 117px; }
.g-137 { width: 137px; }
.g-159 { width: 159px; }
.g-170 { width: 170px; }
.g-248 { width: 248px; }
.pad1 .tools { padding-left: 1px; }
.pad3 .tools { padding-left: 3px; }
.pad4 .tools { padding-left: 4px; }
.pad5 { padding-left: 5px; }
.group h2 { margin-top: 5px; padding-right: 3px; text-align: center; color: #666; }
.tools { display: flex; height: 78px; }
.tool {
  display: flex;
  flex-direction: column;
  align-items: center;
  height: 78px;
  border: 1px solid transparent;
}
.w22 { width: 22px; }
.w42 { width: 42px; }
.w44 { width: 44px; }
.w48 { width: 48px; }
.w53 { width: 53px; }
.icon { width: 38px; height: 38px; }
.label { margin-top: -1px; line-height: 17px; white-space: nowrap; }
.caret {
  display: inline-block;
  margin-left: 3px;
  border: 3px solid transparent;
  border-top-color: #222;
  border-bottom: 0;
  vertical-align: middle;
}
.caret.below { display: block; width: 6px; margin: 6px 1px 0 auto; }
.caret.blue { margin: 0; border-top-color: #44608c; }
.caret.up { margin: 0; border: 3px solid transparent; border-top: 0; border-bottom-color: #aab; }
.caret.more { position: relative; }
.caret.more::before { content: ""; position: absolute; left: -3px; top: -6px; width: 6px; height: 1px; background: #44608c; }
.disabled { color: #a0a0a0; }
.disabled .caret { border-top-color: #b5b5b5; }
.pressed { background: #c9dff6; border-color: #6ba1d5; }
.smalls { display: grid; grid-auto-rows: 33px; padding-top: 6px; }
.small { display: flex; align-items: center; justify-content: center; }
.start { padding-left: 4px; }
.start .small { justify-content: flex-start; }
.pairs { grid-template-columns: 32px 32px; margin-left: 2px; }
.s16 { width: 16px; height: 16px; flex: none; }
.gallery { display: flex; height: 60px; margin-top: 3px; border: 1px solid #d8d9db; background: #fbfcfd; }
.item { width: 58px; height: 58px; border: 0; }
.item .icon { height: 36px; }
.item .label { margin-top: 0; }
.scroller { display: grid; width: 15px; border-left: 1px solid #d8d9db; background: #f5f6f7; }
.scroller button { display: flex; align-items: center; justify-content: center; }
.room-a { font: bold 12px "DejaVu Sans", sans-serif; fill: #275539; }
.room-2 { font: 8px "DejaVu Sans", sans-serif; fill: #275539; }

.menu-anchor { position: relative; }
.menu {
  position: absolute;
  z-index: 5;
  top: 78px;
  left: 0;
  width: 168px;
  padding: 1px;
  border: 1px solid #d5d7d9;
  background: linear-gradient(to right, #fbfdff 25px, #dfe1e3 25px, #dfe1e3 26px, #fbfdff 26px);
}
.menu button {
  display: flex;
  align-items: center;
  gap: 13px;
  width: 100%;
  height: 25px;
  padding: 0 0 2px 3px;
  border: 1px solid transparent;
  white-space: nowrap;
}
.menu .hot { border-color: #a8cfee; background: linear-gradient(to right, #eef5fd 23px, #dfe1e3 23px, #dfe1e3 24px, #ebf3fc 24px); }
.menu .gap { height: 2px; margin-left: 32px; border-top: 1px solid #d9dbdd; }

.quick { display: flex; align-items: center; gap: 11px; height: 26px; padding: 0 0 1px 1px; border-bottom: 1px solid #5c5c5c; }

.work { display: flex; flex: 1; }
.browser {
  display: flex;
  flex-direction: column;
  width: 356px;
  flex: none;
  border-right: 1px solid #5c5c5c;
  background: #f0f0f0;
}
.browser h1 {
  height: 23px;
  margin-bottom: 2px;
  text-indent: -2px;
  background: linear-gradient(to right, #bccbda, #d6e4f2);
  color: #000;
}
.tree {
  flex: 1;
  margin-right: 3px;
  border: 1px solid #5c5c5c;
  border-width: 1px 1px 0 0;
  background: #fff;
  color: #000;
}
.node { position: relative; display: flex; align-items: center; height: 16px; padding-left: 25px; }
.root { padding-left: 6px; }
.node .exp { z-index: 1; }
.dots { width: 7px; border-top: 1px dotted #888; }
.leaf .dots { width: 12px; margin-left: 4px; }
li.node::before { content: ""; position: absolute; left: 29px; top: 0; height: 16px; border-left: 1px dotted #888; }
li.node:last-child::before { height: 8px; }
.root .dots { width: 6px; }
.name { margin-left: 4px; }
.selected { padding-right: 2px; background: #f0f0f0; }
.mono { font: 10px/16px "Liberation Mono", monospace; }

.canvas { position: relative; flex: 1; overflow: hidden; background: #fff; }
.plan { position: absolute; top: 0; left: 0; width: 100%; height: 100%; shape-rendering: auto; }
.crisp { shape-rendering: crispEdges; }
.wall { fill: #95c5e8; stroke: #6488a3; }
.thick { stroke: #6488a3; stroke-width: 2; }
.room { fill: #fff; stroke: #6488a3; }
.open { fill: #fff; stroke: #6488a3; }
.line { fill: none; stroke: #6488a3; }
.note { fill: #6488a3; font: 9px "Liberation Sans", "Noto Sans CJK SC", sans-serif; text-anchor: middle; }
.sup { font-size: 7px; }

.bar { position: absolute; display: flex; }
.bar button { width: 32px; }
.bar svg { width: 32px; height: 30px; }
.views { top: 0; left: 0; height: 32px; align-items: flex-start; box-shadow: inset -1px -1px #cdcdcd; }
.draw { top: 4px; right: 86px; height: 32px; align-items: center; background: #f7f7f7; box-shadow: inset 0 0 0 1px #cdcdcd; }
.draw .on { background: #ffe2ab; }
.covered { width: 160px; }
```
